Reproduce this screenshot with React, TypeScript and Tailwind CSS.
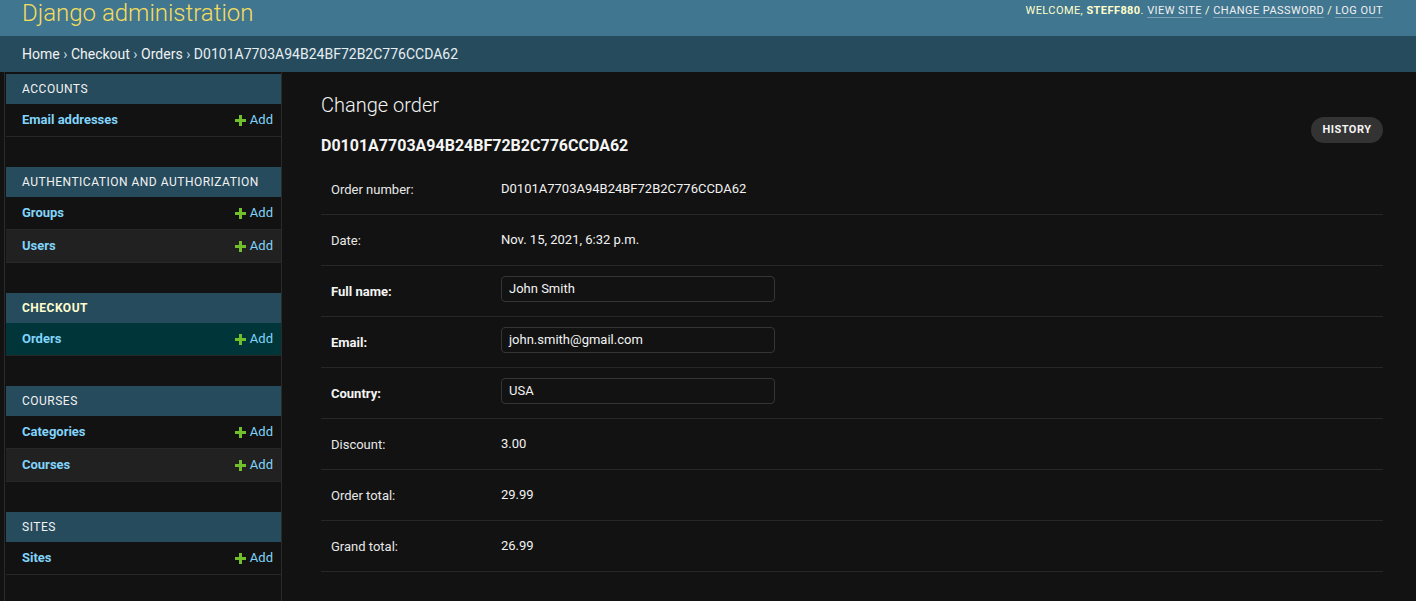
const font = { fontFamily: "Roboto, 'Noto Sans', 'Liberation Sans', sans-serif" };

type Model = { name: string; selected?: boolean };
type AppModule = { title: string; current?: boolean; models: Model[] };

const modules: AppModule[] = [
  { title: "Accounts", models: [{ name: "Email addresses" }] },
  { title: "Authentication and Authorization", models: [{ name: "Groups" }, { name: "Users" }] },
  { title: "Checkout", current: true, models: [{ name: "Orders", selected: true }] },
  { title: "Courses", models: [{ name: "Categories" }, { name: "Courses" }] },
  { title: "Sites", models: [{ name: "Sites" }] },
];

const fields = [
  { label: "Order number:", value: "D0101A7703A94B24BF72B2C776CCDA62" },
  { label: "Date:", value: "Nov. 15, 2021, 6:32 p.m." },
  { label: "Full name:", value: "John Smith", input: true },
  { label: "Email:", value: "john.smith@gmail.com", input: true },
  { label: "Country:", value: "USA", input: true },
  { label: "Discount:", value: "3.00" },
  { label: "Order total:", value: "29.99" },
  { label: "Grand total:", value: "26.99" },
];

function PlusIcon() {
  return (
    <svg width="11" height="11" viewBox="0 0 11 11" className="mr-[4px]">
      <path d="M4 0h3v4h4v3H7v4H4V7H0V4h4z" fill="#70bf2b" />
    </svg>
  );
}

function Sidebar() {
  return (
    <nav className="w-[277px] pl-[1px] pt-[2px] border-r border-[#2b2b2b] bg-[#121212]">
      {modules.map((m) => (
        <div key={m.title} className="mb-[30px]">
          <div
            className={`h-[30px] flex items-center pl-[16px] bg-[#264b5d] text-[12px] uppercase tracking-[0.5px] ${
              m.current ? "font-bold text-[#ffffcc]" : "text-[#f2f2f2]"
            }`}
          >
            {m.title}
          </div>
          {m.models.map((row, i) => (
            <div
              key={row.name}
              className={`h-[33px] flex items-center justify-between pl-[16px] pr-[8px] border-b border-[#272727] text-[13px] ${
                row.selected ? "bg-[#00363a]" : i % 2 === 1 ? "bg-[#212121]" : ""
              }`}
            >
              <span className="font-bold text-[#81d4fa]">{row.name}</span>
              <span className="flex items-center text-[#81d4fa]">
                <PlusIcon />
                Add
              </span>
            </div>
          ))}
        </div>
      ))}
    </nav>
  );
}

export default function App() {
  return (
    <div className="min-h-screen bg-[#121212] text-[#eeeeee] flex flex-col" style={font}>
      {/* Header */}
      <header className="h-[36px] bg-[#417690] flex items-start justify-between pl-[22px] pr-[33px] pt-[1px]">
        <div className="text-[24px] leading-[24px] font-light text-[#f5dd5d]">Django administration</div>
        <div className="pt-[3px] text-[11px] leading-[14px] tracking-[0.43px] uppercase text-[#ffffcc]">
          Welcome, <strong className="font-bold">steff880</strong>.{" "}
          <span className="text-[#f0f0f0] border-b border-white/30">View site</span> /{" "}
          <span className="text-[#f0f0f0] border-b border-white/30">Change password</span> /{" "}
          <span className="text-[#f0f0f0] border-b border-white/30">Log out</span>
        </div>
      </header>

      {/* Breadcrumbs */}
      <div className="h-[36px] bg-[#264b5d] flex items-center pl-[22px] text-[14px] text-[#c4dce8]">
        <span className="text-[#f2f2f2]">Home</span>
        <span className="mx-[3.5px]">›</span>
        <span className="text-[#f2f2f2]">Checkout</span>
        <span className="mx-[3.5px]">›</span>
        <span className="text-[#f2f2f2]">Orders</span>
        <span className="mx-[3.5px]">›</span>
        <span className="text-[#e6eef2]">D0101A7703A94B24BF72B2C776CCDA62</span>
      </div>

      <div className="flex flex-1">
        <div className="w-[5px] border-r border-[#2b2b2b]" />
        <Sidebar />

        {/* Content */}
        <main className="flex-1 pl-[39px] pr-[33px] pt-[21px]">
          <h1 className="text-[20px] leading-[24px] font-light text-[#f2f2f2]">Change order</h1>
          <div className="h-[39px] flex justify-between items-start">
            <h2 className="self-end text-[16px] leading-[20px] font-bold text-[#f5f5f5]">
              D0101A7703A94B24BF72B2C776CCDA62
            </h2>
            <button className="h-[26px] w-[72px] rounded-full bg-[#333333] text-[11px] font-bold uppercase tracking-[0.5px] text-[#f5f5f5]">
              History
            </button>
          </div>

          <div className="mt-[8px]">
            {fields.map((f) => (
              <div key={f.label} className="h-[51px] flex items-center border-b border-[#272727] pl-[10px] text-[13px]">
                <div className={`w-[170px] pt-[2px] ${f.input ? "font-bold text-[#f5f5f5]" : "text-[#e8e8e8]"}`}>
                  {f.label}
                </div>
                {f.input ? (
                  <div className="w-[274px] h-[26px] mb-[4px] flex items-center px-[7px] border border-[#353535] rounded-[4px] bg-[#121212] text-[#f2f2f2]">
                    {f.value}
                  </div>
                ) : (
                  <div className="pb-[1px] text-[#f2f2f2]">{f.value}</div>
                )}
              </div>
            ))}
          </div>
        </main>
      </div>
    </div>
  );
}
